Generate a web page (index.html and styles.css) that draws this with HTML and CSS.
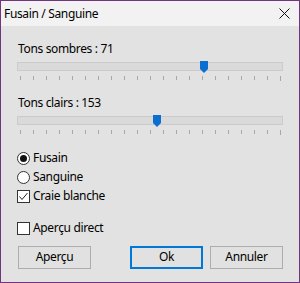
FILE: index.html
```html
<!DOCTYPE html>
<html lang="fr">
<head>
  <meta charset="UTF-8">
  <title>Fusain / Sanguine</title>
  <link rel="stylesheet" href="styles.css">
</head>
<body>

  <div class="window">
    <div class="titlebar">
      <span class="title">Fusain / Sanguine</span>
      <svg class="close" width="11" height="11" viewBox="0 0 11 11">
        <path d="M0.5 0.5 L10.5 10.5 M10.5 0.5 L0.5 10.5" stroke="#111" stroke-width="1" fill="none"/>
      </svg>
    </div>

    <div class="client">
      <div class="slider-group">
        <div class="label">Tons sombres : 71</div>
        <div class="slider">
          <div class="track"></div>
          <svg class="thumb" style="left: 183px" width="8" height="12" viewBox="0 0 8 12">
            <path d="M0 0 H8 V8 L4 12 L0 8 Z" fill="#0a6fd0"/>
          </svg>
          <div class="ticks">
            <span></span><span></span><span></span><span></span><span></span><span></span><span></span>
            <span></span><span></span><span></span><span></span><span></span><span></span><span></span>
            <span></span><span></span><span></span><span></span><span></span><span></span><span class="last"></span>
          </div>
        </div>
      </div>

      <div class="slider-group">
        <div class="label">Tons clairs : 153</div>
        <div class="slider">
          <div class="track"></div>
          <svg class="thumb" style="left: 136px" width="8" height="12" viewBox="0 0 8 12">
            <path d="M0 0 H8 V8 L4 12 L0 8 Z" fill="#0a6fd0"/>
          </svg>
          <div class="ticks">
            <span></span><span></span><span></span><span></span><span></span><span></span><span></span>
            <span></span><span></span><span></span><span></span><span></span><span></span><span></span>
            <span></span><span></span><span></span><span></span><span></span><span></span><span class="last"></span>
          </div>
        </div>
      </div>

      <div class="options">
        <div class="option"><span class="radio checked"></span><span class="text">Fusain</span></div>
        <div class="option"><span class="radio"></span><span class="text">Sanguine</span></div>
        <div class="option">
          <span class="checkbox">
            <svg width="11" height="11" viewBox="0 0 11 11"><path d="M1.5 5.5 L4 8.5 L9.5 2" stroke="#222" stroke-width="1" fill="none"/></svg>
          </span>
          <span class="text">Craie blanche</span>
        </div>
      </div>

      <div class="option direct"><span class="checkbox"></span><span class="text">Aperçu direct</span></div>

      <div class="buttons">
        <button class="btn preview">Aperçu</button>
        <button class="btn ok">Ok</button>
        <button class="btn">Annuler</button>
      </div>
    </div>
  </div>

</body>
</html>
```

FILE: styles.css
```css
body {
  margin: 0;
  padding: 0;
  font-family: 'Noto Sans', 'Open Sans', sans-serif;
  font-size: 12px;
  letter-spacing: -0.35px;
  color: #000;
}

.window {
  width: 300px;
  height: 283px;
  box-sizing: border-box;
  border: 1px solid #72347f;
  display: flex;
  flex-direction: column;
  background-color: #e2e2e2;
}

.titlebar {
  height: 25px;
  background-color: #f2f2f2;
  display: flex;
  align-items: center;
  justify-content: space-between;
  padding-left: 3px;
}

.title {
  line-height: 15px;
  padding-bottom: 1px;
}

.close {
  margin-right: 9px;
}

.client {
  flex: 1;
  padding: 15px 16px 0 16px;
}

.slider-group {
  margin-bottom: 14px;
}

.label {
  line-height: 15px;
  padding-left: 1px;
}

.slider {
  position: relative;
  margin-top: 6px;
}

.track {
  height: 9px;
  box-sizing: border-box;
  background-color: #dadada;
  border: 1px solid #cbcbcb;
}

.thumb {
  position: absolute;
  top: -1px;
}

.ticks {
  display: flex;
  justify-content: space-between;
  align-items: flex-start;
  height: 5px;
  margin: 5px 2px 0 3px;
}

.ticks span {
  width: 1px;
  height: 4px;
  background-color: #a8a8a8;
}

.ticks span.last {
  height: 5px;
}

.options {
  margin-top: 10px;
}

.option {
  height: 19px;
  display: flex;
  align-items: center;
  gap: 3px;
}

.option .text {
  line-height: 15px;
  padding-bottom: 2px;
}

.option.direct {
  margin-top: 13px;
}

.radio {
  width: 13px;
  height: 13px;
  box-sizing: border-box;
  border: 1px solid #333;
  border-radius: 50%;
  background-color: #fff;
  display: flex;
  align-items: center;
  justify-content: center;
}

.radio.checked::after {
  content: "";
  width: 7px;
  height: 7px;
  border-radius: 50%;
  background-color: #111;
}

.checkbox {
  width: 13px;
  height: 13px;
  box-sizing: border-box;
  border: 1px solid #333;
  background-color: #fff;
  display: flex;
  align-items: center;
  justify-content: center;
}

.buttons {
  display: flex;
  gap: 7px;
  margin-top: 8px;
}

.btn {
  width: 73px;
  height: 23px;
  box-sizing: border-box;
  font-family: inherit;
  font-size: 12px;
  letter-spacing: -0.35px;
  color: #000;
  background-color: #e1e1e1;
  border: 1px solid #adadad;
  padding: 0 0 2px 0;
}

.btn.preview {
  margin-left: 1px;
  margin-right: auto;
}

.btn.ok {
  border: 2px solid #0078d7;
}
```
